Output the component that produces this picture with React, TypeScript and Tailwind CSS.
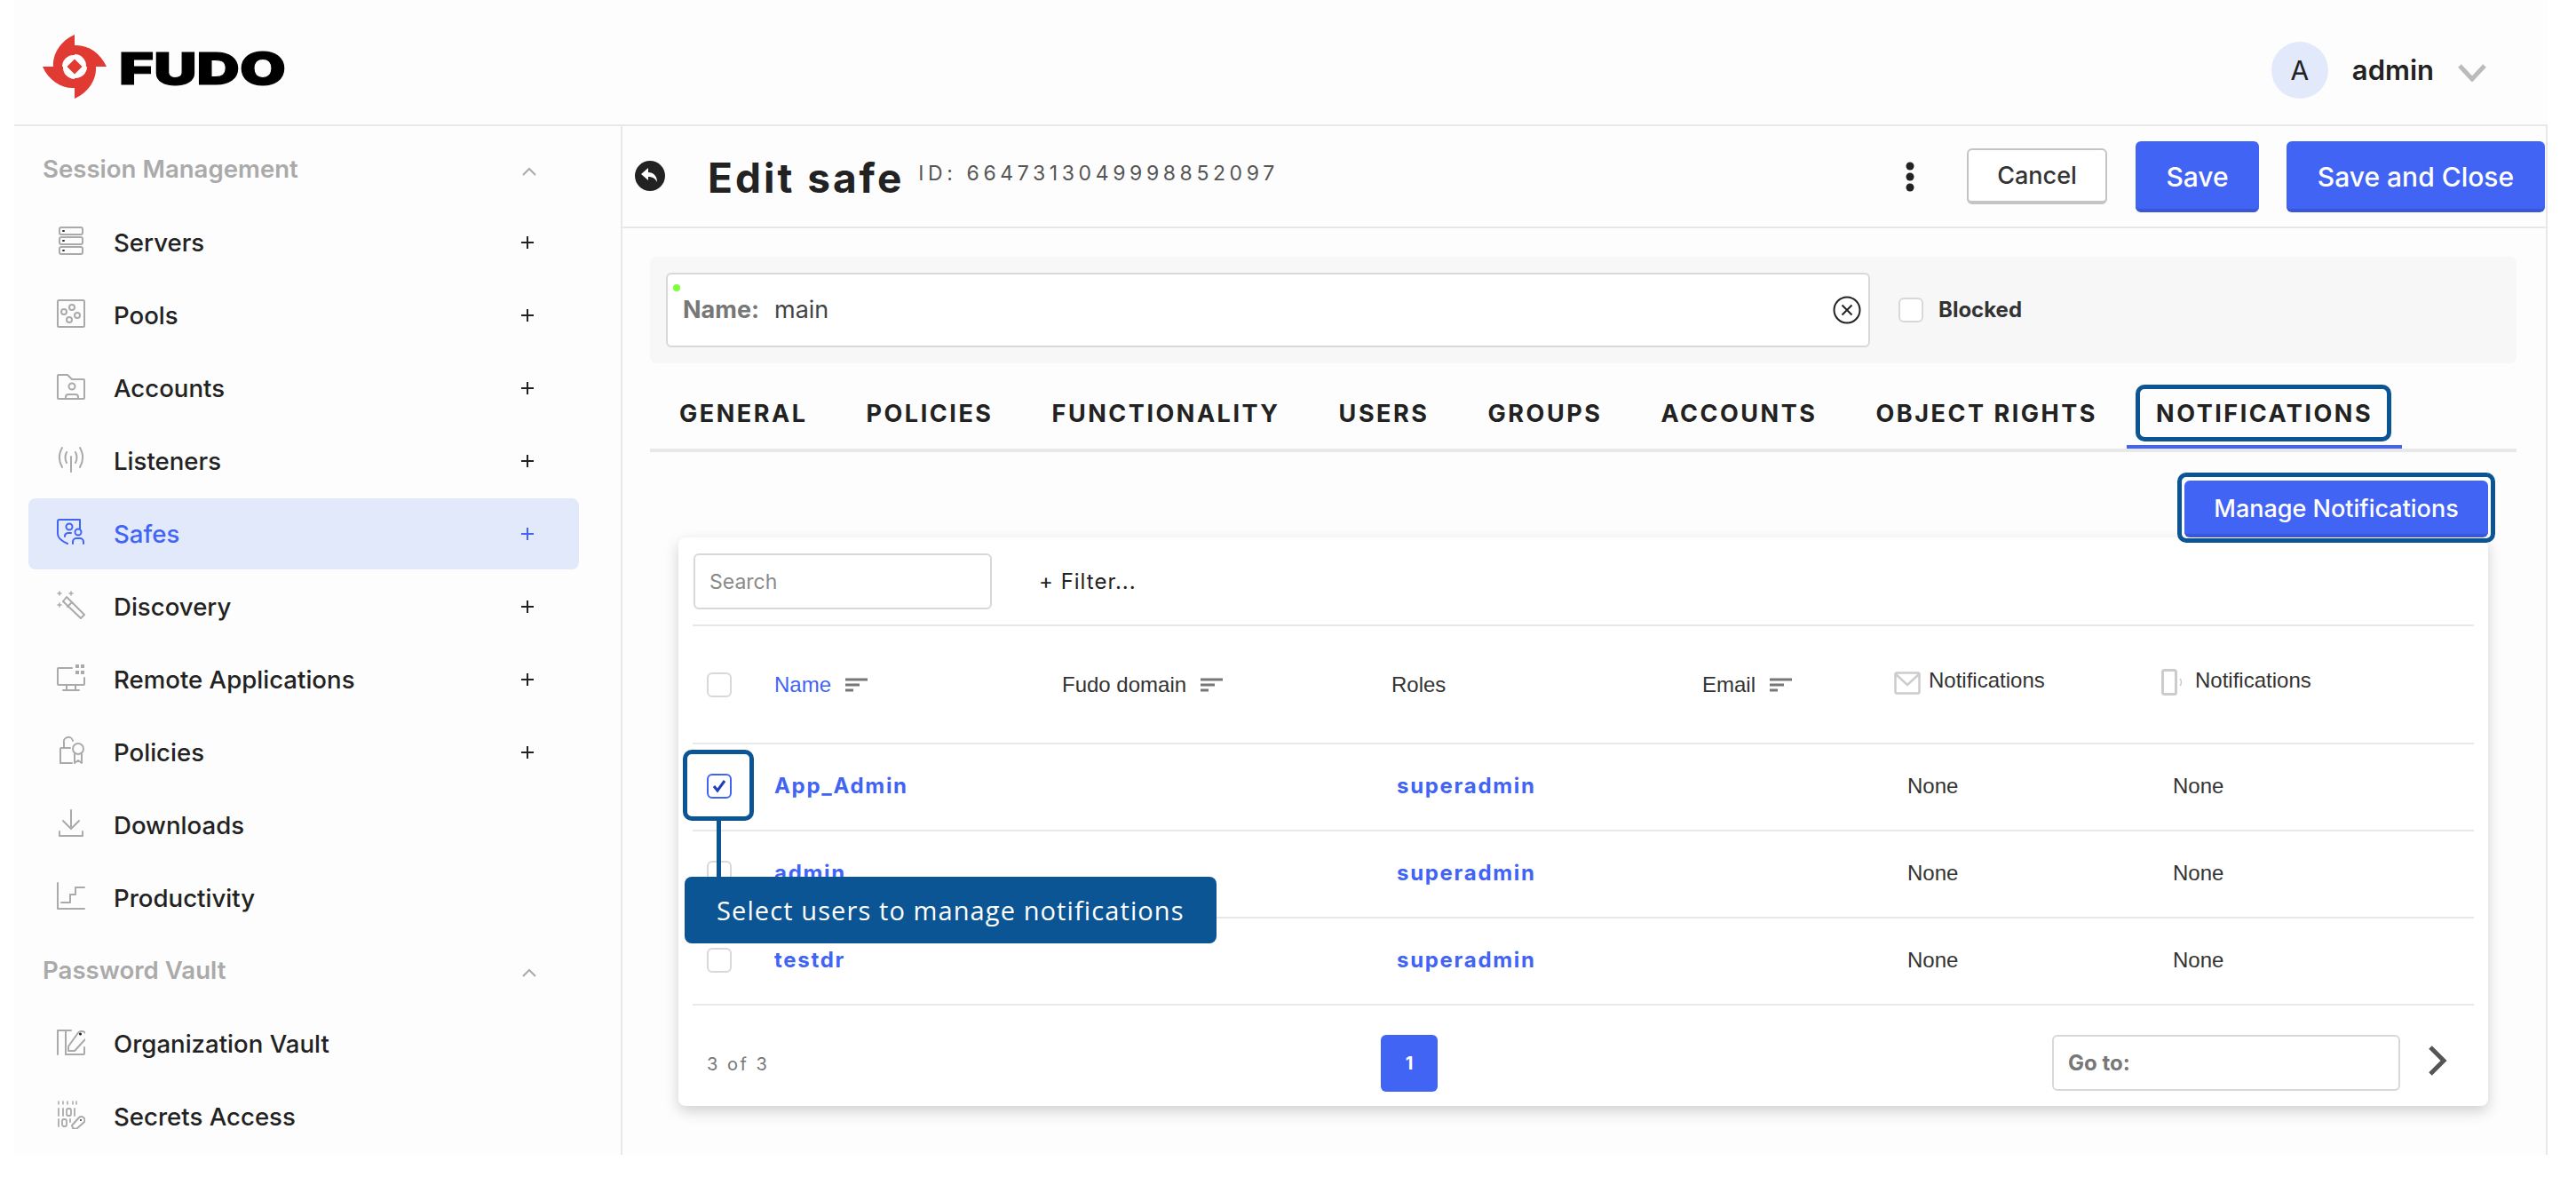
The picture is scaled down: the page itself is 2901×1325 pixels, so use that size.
import type { ReactNode } from 'react';

type NavItem = { label: string; icon: ReactNode; plus?: boolean; active?: boolean };

const Ico = ({ children, blue }: { children: ReactNode; blue?: boolean }) => (
  <svg
    viewBox="0 0 32 32"
    fill="none"
    stroke={blue ? '#4264f5' : '#aaaaaa'}
    strokeWidth={2}
    strokeLinecap="round"
    strokeLinejoin="round"
    className="w-8 h-8 shrink-0 mb-1"
  >
    {children}
  </svg>
);

const servers = (
  <Ico>
    <rect x="3" y="1" width="26" height="8" rx="2" />
    <rect x="3" y="12" width="26" height="8" rx="2" />
    <rect x="3" y="23" width="26" height="8" rx="2" />
    <path d="M7 5h1M7 16h1M7 27h1" stroke="#333" />
  </Ico>
);
const pools = (
  <Ico>
    <rect x="1" y="1" width="30" height="30" rx="1.5" />
    <circle cx="8" cy="14" r="3" />
    <circle cx="17" cy="9" r="3" />
    <circle cx="23" cy="18" r="3" />
    <circle cx="14" cy="23" r="3" />
  </Ico>
);
const accounts = (
  <Ico>
    <path d="M1 4a1 1 0 0 1 1-1h10l5 5h13a1 1 0 0 1 1 1v20a1 1 0 0 1-1 1H2a1 1 0 0 1-1-1Z" />
    <circle cx="17" cy="16" r="3.5" />
    <path d="M10 30v-2a3 3 0 0 1 3-3h8a3 3 0 0 1 3 3v2" />
  </Ico>
);
const listeners = (
  <Ico>
    <path d="M16 13v17" />
    <path d="M11 8c-2 4-2 8 0 12M21 8c2 4 2 8 0 12" />
    <path d="M6 3c-4 7-4 15 0 22M26 3c4 7 4 15 0 22" />
  </Ico>
);
const safes = (
  <Ico blue>
    <path d="M26 12V2H3a2 2 0 0 0-2 2v14c0 4 4 8 11 11" />
    <circle cx="14" cy="10" r="3.5" />
    <path d="M9 21v-1a4 4 0 0 1 4-3h3" />
    <circle cx="24" cy="16" r="3.5" />
    <path d="M18 29v-2a4 4 0 0 1 4-4h4a4 4 0 0 1 4 4v2" />
  </Ico>
);
const discovery = (
  <Ico>
    <path d="M11 7L31 27L27 31L7 12Z" />
    <path d="M17 13L12 18" />
    <path d="M3 1v4M1 3h4M16 1v4M14 3h4M3 14v4M1 16h4" strokeWidth={1.5} />
  </Ico>
);
const remote = (
  <Ico>
    <path d="M17 5H2a1 1 0 0 0-1 1v17a1 1 0 0 0 1 1h28a1 1 0 0 0 1-1v-7" />
    <path d="M11 24v6M21 24v6M7 30h18" />
    <rect x="21" y="1" width="4" height="4" fill="#aaa" stroke="none" />
    <rect x="27" y="1" width="4" height="4" fill="#aaa" stroke="none" />
    <rect x="21" y="8" width="4" height="4" fill="#aaa" stroke="none" />
    <rect x="27" y="8" width="4" height="4" fill="#aaa" stroke="none" />
  </Ico>
);
const policies = (
  <Ico>
    <path d="M15 13H5a1 1 0 0 0-1 1v16h13" />
    <path d="M8 13V7a5 5 0 0 1 10-2" />
    <circle cx="24" cy="14" r="6" />
    <path d="M20 20v10l4-3 4 3V20" />
  </Ico>
);
const downloads = (
  <Ico>
    <path d="M16 1v20M7 13l9 9 9-9" />
    <path d="M3 25v5h26v-5" />
  </Ico>
);
const productivity = (
  <Ico>
    <path d="M1 1v29h30" />
    <path d="M5 23h10v-9h6V6h10" />
  </Ico>
);
const orgVault = (
  <Ico>
    <path d="M1 30V3h9v27" />
    <path d="M10 3h6" />
    <path d="M10 30h20a1 1 0 0 0 1-1v-7" />
    <path d="M13 26v-5L23 7a5.5 5.5 0 1 1 8 7L20 26Z" />
    <circle cx="26.5" cy="7" r="1.6" fill="#222" stroke="none" />
  </Ico>
);
const secrets = (
  <Ico>
    <path d="M2 1v3M7 1v3M12 1v3M18 1v3M22 1v3" strokeWidth={1.6} />
    <path d="M2 9v8M7 9v8M20 9v8" strokeWidth={1.8} />
    <rect x="11" y="9" width="5" height="8" rx="2" strokeWidth={1.8} />
    <path d="M2 21v8" strokeWidth={1.8} />
    <rect x="6" y="21" width="5" height="8" rx="2" strokeWidth={1.8} />
    <path d="M15 21v3" strokeWidth={1.8} />
    <path d="M18 31l-1-3 8-9a4 4 0 0 1 6 5l-9 8Z" />
    <circle cx="27" cy="22" r="1" fill="#333" stroke="none" />
  </Ico>
);

const session: NavItem[] = [
  { label: 'Servers', icon: servers, plus: true },
  { label: 'Pools', icon: pools, plus: true },
  { label: 'Accounts', icon: accounts, plus: true },
  { label: 'Listeners', icon: listeners, plus: true },
  { label: 'Safes', icon: safes, plus: true, active: true },
  { label: 'Discovery', icon: discovery, plus: true },
  { label: 'Remote Applications', icon: remote, plus: true },
  { label: 'Policies', icon: policies, plus: true },
  { label: 'Downloads', icon: downloads },
  { label: 'Productivity', icon: productivity },
];
const vault: NavItem[] = [
  { label: 'Organization Vault', icon: orgVault },
  { label: 'Secrets Access', icon: secrets },
];

const tabs = ['GENERAL', 'POLICIES', 'FUNCTIONALITY', 'USERS', 'GROUPS', 'ACCOUNTS', 'OBJECT RIGHTS'];
const users = ['App_Admin', 'admin', 'testdr'];

const PlusIcon = ({ color }: { color: string }) => (
  <svg viewBox="0 0 14 14" className="w-[14px] h-[14px]" fill="none" stroke={color} strokeWidth={2}>
    <path d="M7 0v14M0 7h14" />
  </svg>
);

const SectionHead = ({ label }: { label: string }) => (
  <div className="h-[82px] flex items-center justify-between pl-8 pr-[95px]">
    <span className="text-[27.6px] font-semibold text-[#aaaaaa]">{label}</span>
    <svg viewBox="0 0 16 10" className="w-4 h-[10px] mt-1" fill="none" stroke="#aaaaaa" strokeWidth={2}>
      <path d="M1 9l7-7 7 7" />
    </svg>
  </div>
);

const NavRow = ({ item }: { item: NavItem }) => (
  <div className="h-[82px] py-px pl-4 w-[636px]">
    <div
      className={`h-full flex items-center pl-8 pr-[51px] rounded-lg ${item.active ? 'bg-[#e1e9fb]' : ''}`}
    >
      {item.icon}
      <span className={`ml-8 pt-px text-[27.6px] font-medium flex-1 ${item.active ? 'text-[#4264f5]' : 'text-[#222222]'}`}>
        {item.label}
      </span>
      {item.plus && <PlusIcon color={item.active ? '#4264f5' : '#222222'} />}
    </div>
  </div>
);

const SortIcon = () => (
  <svg viewBox="0 0 25 16" className="w-[25px] h-4" fill="none" stroke="#777777" strokeWidth={3}>
    <path d="M0 2h25M0 8h16M0 14h9" />
  </svg>
);

const Checkbox = ({ checked }: { checked?: boolean }) => (
  <div
    className={`w-7 h-7 rounded-md border-2 bg-white flex items-center justify-center ${checked ? 'border-[#4264f5]' : 'border-[#d8d8d8]'}`}
  >
    {checked && (
      <svg viewBox="0 0 16 16" className="w-4 h-4" fill="none" stroke="#1f3fbf" strokeWidth={3}>
        <path d="M2 8l4 5 8-11" />
      </svg>
    )}
  </div>
);

export default function App() {
  return (
    <div className="w-[2901px] h-[1325px] bg-white overflow-hidden font-['Inter',sans-serif]">
      <div className="ml-4 w-[2853px] h-[1300px] bg-[#fdfdfd] flex flex-col">
        <header className="h-[142px] shrink-0 border-b-2 border-[#e8e8e8] flex items-center pl-8">
          <svg viewBox="0 0 72 72" className="w-[72px] h-[72px] mt-[10px]">
            <g fill="#e03a33">
              <path d="M36 0V23A13 13 0 0 0 22 36H12C11 22 20 7 36 0Z" />
              <path d="M36 0V23A13 13 0 0 0 22 36H12C11 22 20 7 36 0Z" transform="rotate(90 36 36)" />
              <path d="M36 0V23A13 13 0 0 0 22 36H12C11 22 20 7 36 0Z" transform="rotate(180 36 36)" />
              <path d="M36 0V23A13 13 0 0 0 22 36H12C11 22 20 7 36 0Z" transform="rotate(270 36 36)" />
              <path d="M36 27.5l8.5 8.5-8.5 8.5-8.5-8.5Z" />
            </g>
          </svg>
          <span className="ml-[14px] inline-block origin-left scale-x-[1.34] text-[50px] leading-none font-black text-black [-webkit-text-stroke:1px_black] mt-[13px]">
            FUDO
          </span>
          <div className="ml-auto flex items-center pr-[69px] mt-[18px]">
            <div className="w-16 h-16 rounded-full bg-[#e1e9fb] flex items-center justify-center text-[30px] text-[#222222]">
              A
            </div>
            <span className="ml-[27px] text-[31px] font-semibold text-[#222222]">admin</span>
            <svg viewBox="0 0 32 20" className="ml-[27px] w-8 h-5 mt-[6px]" fill="none" stroke="#bbbbbb" strokeWidth={5}>
              <path d="M2 2l14 15L30 2" />
            </svg>
          </div>
        </header>

        <div className="flex flex-1 min-h-0">
          <aside className="w-[685px] shrink-0 border-r-2 border-[#e8e8e8] pt-2">
            <SectionHead label="Session Management" />
            {session.map((item) => (
              <NavRow key={item.label} item={item} />
            ))}
            <SectionHead label="Password Vault" />
            {vault.map((item) => (
              <NavRow key={item.label} item={item} />
            ))}
          </aside>

          <main className="flex-1 min-w-0 border-r-2 border-[#e8e8e8]">
            <div className="h-[115px] border-b-2 border-[#e8e8e8] flex items-center pl-[14px] pr-px">
              <svg viewBox="0 0 34 34" className="w-[34px] h-[34px] mt-[-2px]">
                <circle cx="17" cy="17" r="17" fill="#222222" />
                <path d="M7 15l8-7v5c6 0 10 4 10 11-2-4-5-6-10-6v4Z" fill="#ffffff" />
              </svg>
              <h1 className="ml-12 mt-[2px] text-[46px] font-bold text-[#222222] tracking-[3px] leading-none">Edit safe</h1>
              <span className="ml-4 mb-[6px] text-[23px] tracking-[4.6px] text-[#555555]">ID: 6647313049998852097</span>
              <div className="ml-auto flex items-center">
                <svg viewBox="0 0 10 34" className="w-[10px] h-[34px] mr-[59px]" fill="#222222">
                  <circle cx="5" cy="5" r="4.5" />
                  <circle cx="5" cy="17" r="4.5" />
                  <circle cx="5" cy="29" r="4.5" />
                </svg>
                <button className="w-[158px] h-[63px] pt-[2px] rounded-md bg-white border-2 border-b-4 border-[#c4c4c4] text-[27px] font-medium text-[#333333]">
                  Cancel
                </button>
                <button className="ml-8 w-[139px] h-20 pt-[6px] rounded-md bg-[#4264f5] border-b-4 border-[#3a57d8] text-[30px] font-medium text-white">
                  Save
                </button>
                <button className="ml-[31px] w-[291px] h-20 pt-[6px] rounded-md bg-[#4264f5] border-b-4 border-[#3a57d8] text-[30px] font-medium text-white">
                  Save and Close
                </button>
              </div>
            </div>

            <div className="ml-[31px] mr-[33px]">
              <div className="mt-8 h-[120px] bg-[#f7f7f7] rounded-lg flex items-center pl-[18px]">
                <div className="relative w-[1356px] h-[84px] bg-white border-2 border-[#d8d8d8] rounded-md flex items-center pl-[17px] pr-[6px]">
                  <div className="absolute left-[6px] top-[11px] w-2 h-2 rounded-full bg-[#7dff3c]" />
                  <span className="text-[27px] font-bold text-[#777777]">Name:</span>
                  <span className="ml-[17px] text-[27px] text-[#444444]">main</span>
                  <svg viewBox="0 0 32 32" className="ml-auto w-8 h-8 mr-[2px]" fill="none" stroke="#222222" strokeWidth={2}>
                    <circle cx="16" cy="16" r="14.5" />
                    <path d="M10.5 10.5l11 11M21.5 10.5l-11 11" />
                  </svg>
                </div>
                <div className="ml-[32px] w-7 h-7 rounded-md border-2 border-[#d8d8d8] bg-white" />
                <span className="ml-[17px] text-[24px] font-bold text-[#333333]">Blocked</span>
              </div>

              <div className="flex border-b-4 border-[#e8e8e8]">
                {tabs.map((tab) => (
                  <div key={tab} className="h-24 px-[33px] pt-[37px] text-[27px] leading-10 font-bold tracking-[2.53px] text-[#222222]">
                    {tab}
                  </div>
                ))}
                <div className="relative h-24 px-[33px] pt-[37px] text-[27px] leading-10 font-bold tracking-[2.53px] text-[#222222]">
                  NOTIFICATIONS
                  <div className="absolute left-[10px] right-[12px] top-6 h-16 border-[5px] border-[#0c5594] rounded-[10px]" />
                  <div className="absolute left-0 right-0 bottom-0 h-1 bg-[#4264f5]" />
                </div>
              </div>

              <div className="flex justify-end pr-[32px] pt-8">
                <div className="relative z-10">
                  <button className="w-[342px] h-16 pt-1 rounded-md bg-[#4264f5] border-b-4 border-[#3a57d8] text-[27px] font-medium text-white">
                    Manage Notifications
                  </button>
                  <div className="absolute -left-2 -right-2 top-[-9px] bottom-[-6px] border-[5px] border-[#0c5594] rounded-[10px]" />
                </div>
              </div>

              <section className="ml-[32px] w-[2038px] h-[640px] bg-white rounded-lg shadow-[0_6px_16px_rgba(0,0,0,0.18)] px-4 font-['Liberation_Sans',sans-serif] text-[24px] text-[#333333]">
                <div className="h-[100px] border-b-2 border-[#e8e8e8] flex items-start pt-[18px]">
                  <div className="ml-px w-[336px] h-[63px] border-2 border-[#d8d8d8] rounded-md flex items-center pl-4 pt-px text-[#8a8a8a] font-['Inter',sans-serif] text-[23px]">
                    Search
                  </div>
                  <span className="ml-[53px] mt-[14px] font-['Inter',sans-serif] text-[24px] tracking-[1px] text-[#222222]">
                    + Filter...
                  </span>
                </div>

                <div className="h-[133px] border-b-2 border-[#e8e8e8] grid grid-cols-[92px_324px_371px_350px_216px_301px_1fr] items-center">
                  <div className="pl-4">
                    <Checkbox />
                  </div>
                  <div className="flex items-center gap-4 text-[#4264f5]">
                    Name
                    <SortIcon />
                  </div>
                  <div className="flex items-center gap-4">
                    Fudo domain
                    <SortIcon />
                  </div>
                  <div>Roles</div>
                  <div className="flex items-center gap-4">
                    Email
                    <SortIcon />
                  </div>
                  <div className="flex items-start gap-[9px] mb-[10px]">
                    <svg viewBox="0 0 30 26" className="w-[30px] h-[26px] mt-2" fill="none" stroke="#cccccc" strokeWidth={2.5}>
                      <rect x="1.5" y="1.5" width="27" height="23" rx="1.5" />
                      <path d="M2 3l13 12L28 3" />
                    </svg>
                    Notifications
                  </div>
                  <div className="flex items-center mb-[10px]">
                    <svg viewBox="0 0 28 30" className="w-7 h-[30px] mt-1" fill="none" stroke="#cccccc" strokeWidth={3}>
                      <rect x="1.5" y="1.5" width="15" height="27" rx="2" />
                      <path d="M21 11c2 2 2 6 0 8" strokeWidth={1.5} />
                    </svg>
                    <span className="ml-[10px]">Notifications</span>
                  </div>
                </div>

                {users.map((user, i) => (
                  <div
                    key={user}
                    className="relative h-[98px] pb-[2px] border-b-2 border-[#e8e8e8] grid grid-cols-[92px_324px_371px_350px_216px_301px_1fr] items-center"
                  >
                    <div className="pl-4">
                      <Checkbox checked={i === 0} />
                    </div>
                    <div className="font-['Inter',sans-serif] font-bold tracking-[1.7px] text-[#4264f5]">{user}</div>
                    <div />
                    <div className="pl-[6px] font-['Inter',sans-serif] font-bold tracking-[1.7px] text-[#4264f5]">superadmin</div>
                    <div />
                    <div className="pl-[15px]">None</div>
                    <div className="pl-[13px]">None</div>
                    {i === 0 && (
                      <div className="absolute z-10 inset-0 pointer-events-none">
                        <div className="absolute left-[-11px] top-[6px] w-20 h-20 border-[5px] border-[#0c5594] rounded-[10px]" />
                        <div className="absolute left-[27px] top-[86px] w-[5px] h-[66px] bg-[#0c5594]" />
                        <div className="absolute left-[-9px] top-[149px] w-[599px] h-[75px] rounded-lg bg-[#0c5594] flex items-center pl-9 font-['Open_Sans',sans-serif] text-[29px] tracking-[1.1px] text-white">
                          Select users to manage notifications
                        </div>
                      </div>
                    )}
                  </div>
                ))}

                <div className="relative pt-[33px] flex items-start">
                  <span className="w-[775px] pl-4 mt-[18px] text-[20px] tracking-[2.5px] text-[#777777] font-['Inter',sans-serif]">
                    3 of 3
                  </span>
                  <div className="w-16 h-16 rounded-md bg-[#4264f5] flex items-center justify-center font-['Inter',sans-serif] text-[20px] font-bold text-white">
                    1
                  </div>
                  <div className="ml-[692px] w-[392px] h-[63px] border-2 border-[#d8d8d8] rounded-md flex items-center pl-4 text-[24px] font-bold text-[#777777] font-['Inter',sans-serif]">
                    Go to:
                  </div>
                  <svg viewBox="0 0 22 34" className="ml-[31px] mt-3 w-[22px] h-[34px]" fill="none" stroke="#555555" strokeWidth={5}>
                    <path d="M3 2l15 15L3 32" />
                  </svg>
                </div>
              </section>
            </div>
          </main>
        </div>
      </div>
    </div>
  );
}
